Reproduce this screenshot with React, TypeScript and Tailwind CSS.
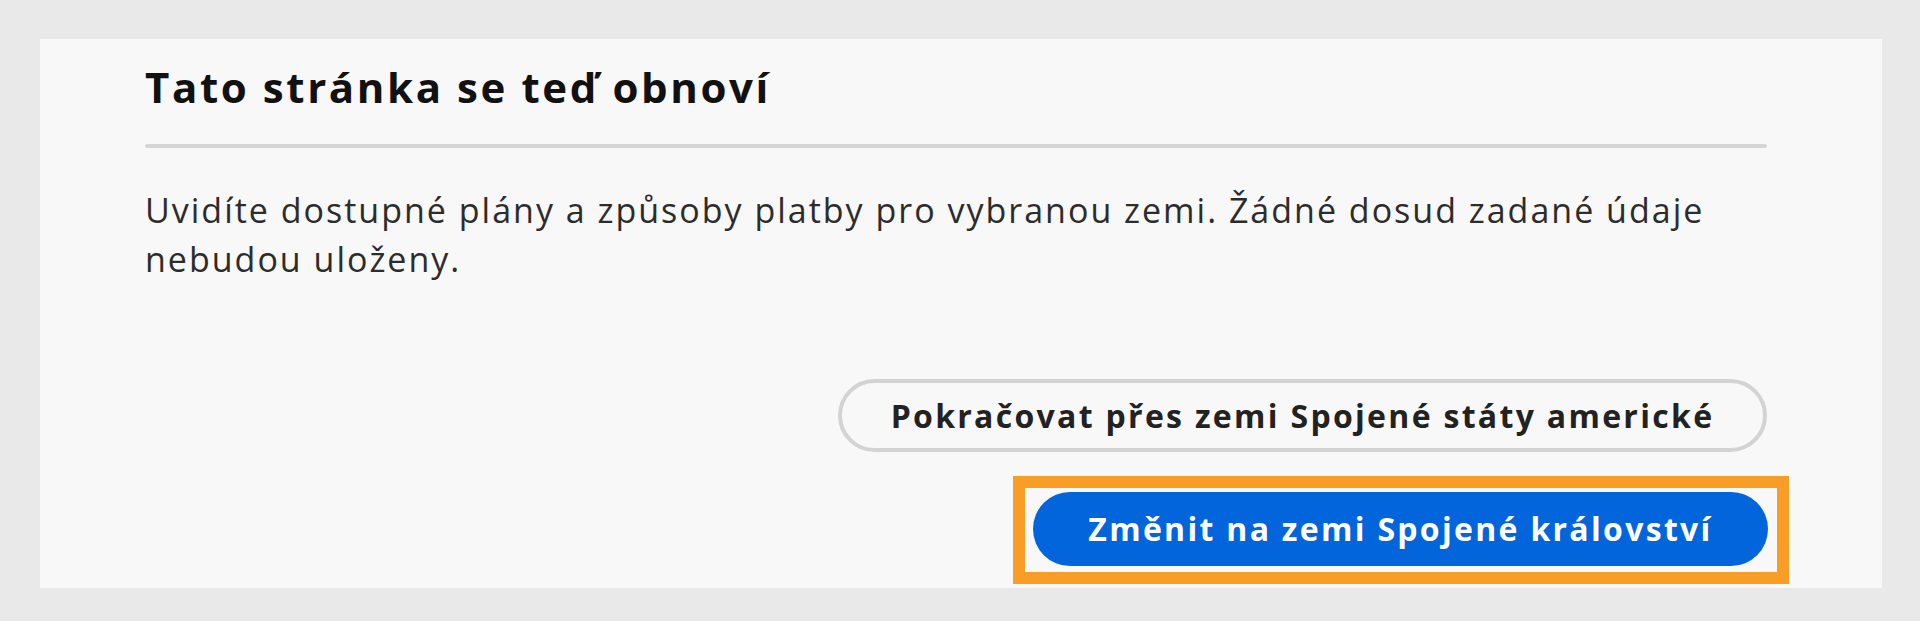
export default function App() {
  return (
    <div className="h-[621px] w-full bg-[#e9e9e9] pt-[39px] pl-[40px]" style={{ fontFamily: '"Open Sans", "Liberation Sans", sans-serif' }}>
      <div className="flex h-[549px] w-[1842px] flex-col bg-[#f8f8f8] pl-[105px] pr-[115px] pt-[24px]">
        <h1 className="text-[42px] font-bold leading-[48px] tracking-[2.6px] text-[#111]">Tato stránka se teď obnoví</h1>
        <div className="mt-[33px] h-[4px] w-full rounded-full bg-[#d6d6d6]" />
        <p className="mt-[38px] text-[34px] leading-[49px] tracking-[2px] text-[#2c2c2c]">
          Uvidíte dostupné plány a způsoby platby pro vybranou zemi. Žádné dosud zadané údaje nebudou uloženy.
        </p>
        <div className="mt-[95px] flex flex-col items-end">
          <button className="flex h-[73px] w-[929px] items-center justify-center rounded-full border-4 border-[#d3d3d3] bg-[#f8f8f8] text-[32px] font-bold tracking-[2.3px] text-[#222]">
            Pokračovat přes zemi Spojené státy americké
          </button>
          <div className="mt-[24px] mr-[-22px] border-[12px] border-[#f89e26] pt-[4px] pb-[6px] pl-[8px] pr-[9px]">
            <button className="flex h-[74px] w-[735px] items-center justify-center rounded-full bg-[#0265dc] text-[32px] font-bold tracking-[2.3px] text-white">
              Změnit na zemi Spojené království
            </button>
          </div>
        </div>
      </div>
    </div>
  )
}
